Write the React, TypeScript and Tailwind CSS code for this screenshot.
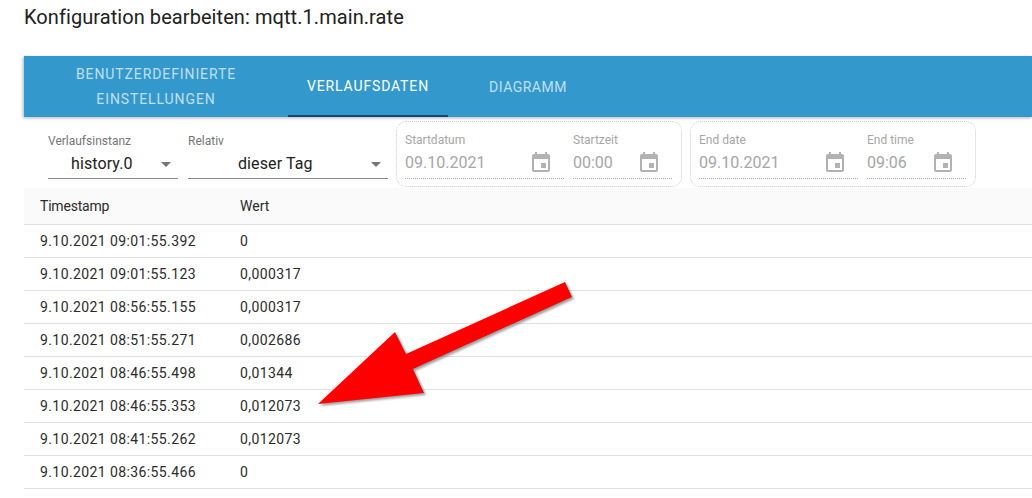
import React from "react";

const rows: [string, string][] = [
  ["9.10.2021 09:01:55.392", "0"],
  ["9.10.2021 09:01:55.123", "0,000317"],
  ["9.10.2021 08:56:55.155", "0,000317"],
  ["9.10.2021 08:51:55.271", "0,002686"],
  ["9.10.2021 08:46:55.498", "0,01344"],
  ["9.10.2021 08:46:55.353", "0,012073"],
  ["9.10.2021 08:41:55.262", "0,012073"],
  ["9.10.2021 08:36:55.466", "0"],
];

function CalendarIcon() {
  return (
    <svg width="24" height="24" viewBox="0 0 24 24" fill="#b2b2b2" className="shrink-0">
      <path d="M17 12h-5v5h5v-5zM16 1v2H8V1H6v2H5c-1.11 0-1.99.9-1.99 2L3 19c0 1.1.89 2 2 2h14c1.1 0 2-.9 2-2V5c0-1.1-.9-2-2-2h-1V1h-2zm3 18H5V8h14v11z" />
    </svg>
  );
}

function Caret() {
  return (
    <svg width="24" height="24" viewBox="0 0 24 24" fill="#757575" className="shrink-0">
      <path d="M7 10l5 5 5-5z" />
    </svg>
  );
}

function SelectField({ label, value, width, indent }: { label: string; value: string; width: string; indent: string }) {
  return (
    <div className={`${width} h-[48px] flex flex-col`}>
      <div className="text-[12px] leading-[14px] text-[#757575]">{label}</div>
      <div className="mt-[1px] flex items-center justify-between h-[30px] border-b border-[#8c8c8c]">
        <span className={`${indent} text-[16px] tracking-[0.1px] text-[#212121]`}>{value}</span>
        <Caret />
      </div>
    </div>
  );
}

function DateField({ label, value, width }: { label: string; value: string; width: string }) {
  return (
    <div className={`${width} h-[48px] flex flex-col`}>
      <div className="text-[12px] leading-[14px] text-[#a6a6a6]">{label}</div>
      <div className="mt-[3px] h-[29px] pb-[2px] flex items-center justify-between border-b border-dotted border-[#a8a8a8] pr-[11px]">
        <span className="text-[16px] text-[#a6a6a6]">{value}</span>
        <CalendarIcon />
      </div>
    </div>
  );
}

function DateGroup({ items }: { items: [string, string, string][] }) {
  return (
    <div className="w-[286px] h-[66px] pt-[11px] pl-[8px] flex gap-[9px] rounded-[10px] border border-dotted border-[#cccccc]">
      {items.map(([l, v, w]) => (
        <DateField key={l} label={l} value={v} width={w} />
      ))}
    </div>
  );
}

export default function App() {
  return (
    <div className="relative w-[1032px] h-[498px] overflow-hidden bg-white font-['Roboto',sans-serif]">
      <div className="h-[56px] pl-[24px] pt-[5px]">
        <h1 className="text-[20px] leading-[24px] font-normal tracking-[0.07px] text-[#212121]">Konfiguration bearbeiten: mqtt.1.main.rate</h1>
      </div>

      <div className="ml-[24px]">
        <div className="h-[61px] flex bg-[#3399cc] shadow-[-1px_1px_3px_0_rgba(0,0,0,0.3)] relative">
          <div className="w-[264px] flex items-center justify-center text-center text-[14px] leading-[25px] tracking-[0.9px] text-white/70 uppercase">
            <span>
              Benutzerdefinierte
              <br />
              Einstellungen
            </span>
          </div>
          <div className="w-[160px] pt-[2px] flex items-center justify-center text-[14px] tracking-[0.85px] text-white uppercase border-b-2 border-[#164477]">
            Verlaufsdaten
          </div>
          <div className="w-[160px] pt-[2px] flex items-center justify-center text-[14px] tracking-[0.5px] text-white/70 uppercase">
            Diagramm
          </div>
        </div>

        <div className="h-[71px] pl-[24px] pt-[4px] flex relative">
          <div className="pt-[13px] flex gap-[10px]">
            <SelectField label="Verlaufsinstanz" value="history.0" width="w-[130px]" indent="ml-[23px]" />
            <SelectField label="Relativ" value="dieser Tag" width="w-[200px]" indent="ml-[50px]" />
          </div>
          <div className="ml-[8px] flex gap-[8px]">
            <DateGroup
              items={[
                ["Startdatum", "09.10.2021", "w-[159px]"],
                ["Startzeit", "00:00", "w-[99px]"],
              ]}
            />
            <DateGroup
              items={[
                ["End date", "09.10.2021", "w-[159px]"],
                ["End time", "09:06", "w-[99px]"],
              ]}
            />
          </div>
        </div>

        <table className="w-full border-collapse text-[14px] text-[#2b2b2b]">
          <thead>
            <tr className="h-[36px] bg-[#fafafa] border-b border-[#e0e0e0]">
              <th className="w-[216px] pl-[16px] pt-[2px] text-left font-normal tracking-[-0.2px]">Timestamp</th>
              <th className="pt-[2px] text-left font-normal">Wert</th>
            </tr>
          </thead>
          <tbody>
            {rows.map(([t, v]) => (
              <tr key={t} className="h-[33px] border-b border-[#e0e0e0] tracking-[0.4px]">
                <td className="pl-[16px] pt-[2px]">{t}</td>
                <td className="pt-[2px]">{v}</td>
              </tr>
            ))}
          </tbody>
        </table>
      </div>

      <svg className="absolute left-0 top-0 pointer-events-none" width="1032" height="498" viewBox="0 0 1032 498">
        <polygon
          points="567,284 574,299 415,371 426,395 320,406 397,334 408,356"
          fill="#555555"
          opacity="0.55"
          style={{ filter: "blur(1px)" }}
        />
        <polygon points="565,282 572,297 413,369 424,393 318,404 395,332 406,354" fill="#ff0000" />
      </svg>
    </div>
  );
}
